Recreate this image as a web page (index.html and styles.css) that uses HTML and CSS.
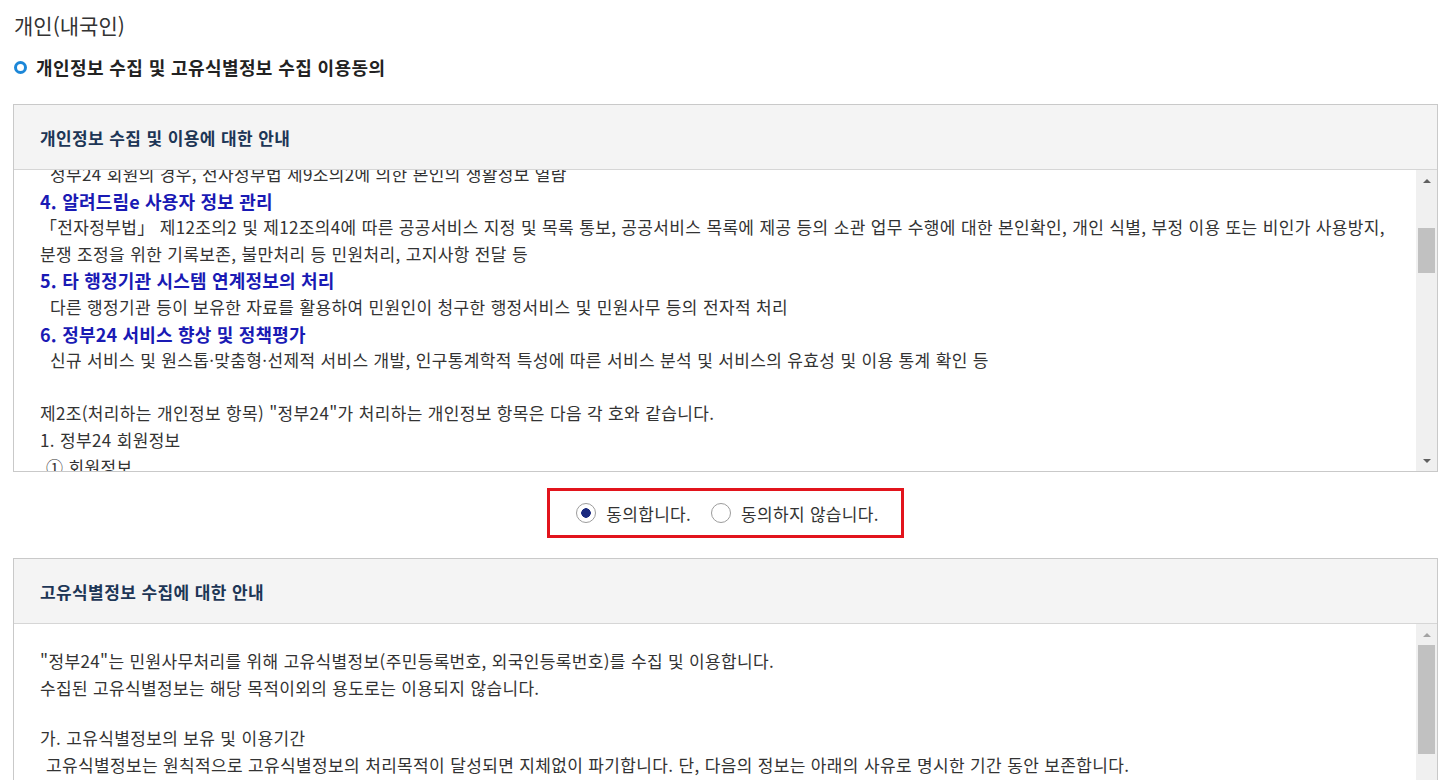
FILE: index.html
```html
<!DOCTYPE html>
<html lang="ko">
<head>
  <meta charset="UTF-8" />
  <meta name="viewport" content="width=device-width, initial-scale=1.0"/>
  <title>개인(내국인) 이용동의</title>
  <link rel="stylesheet" href="styles.css">
</head>
<body>
  <div class="wrap">

    <h2 class="page-title">개인(내국인)</h2>
    <h3 class="sub-title"><span class="dot"></span>개인정보 수집 및 고유식별정보 수집 이용동의</h3>

    <!-- 개인정보 수집 및 이용 -->
    <div class="terms">
      <div class="terms-head">개인정보 수집 및 이용에 대한 안내</div>
      <div class="terms-body">
        <div class="terms-text">
          <div class="terms-inner scrolled">
            <p class="indent">정부24 회원의 경우, 전자정부법 제9조의2에 의한 본인의 생활정보 열람</p>
            <p class="tit">4. 알려드림e 사용자 정보 관리</p>
            <p>「전자정부법」 제12조의2 및 제12조의4에 따른 공공서비스 지정 및 목록 통보, 공공서비스 목록에 제공 등의 소관 업무 수행에 대한 본인확인, 개인 식별, 부정 이용 또는 비인가 사용방지,<br>분쟁 조정을 위한 기록보존, 불만처리 등 민원처리, 고지사항 전달 등</p>
            <p class="tit">5. 타 행정기관 시스템 연계정보의 처리</p>
            <p class="indent">다른 행정기관 등이 보유한 자료를 활용하여 민원인이 청구한 행정서비스 및 민원사무 등의 전자적 처리</p>
            <p class="tit">6. 정부24 서비스 향상 및 정책평가</p>
            <p class="indent">신규 서비스 및 원스톱·맞춤형·선제적 서비스 개발, 인구통계학적 특성에 따른 서비스 분석 및 서비스의 유효성 및 이용 통계 확인 등</p>
            <p>&nbsp;</p>
            <p>제2조(처리하는 개인정보 항목) "정부24"가 처리하는 개인정보 항목은 다음 각 호와 같습니다.</p>
            <p>1. 정부24 회원정보</p>
            <p class="indent-sm">① 회원정보</p>
            <p class="indent">아이디, 비밀번호, 성명, 생년월일, 성별, 내외국인 구분</p>
          </div>
        </div>
        <div class="scrollbar">
          <span class="arrow up"></span>
          <div class="track"><div class="thumb" style="margin-top: 37px; height: 45px;"></div></div>
          <span class="arrow down"></span>
        </div>
      </div>
    </div>

    <div class="agree">
      <div class="agree-box">
        <label class="radio"><input type="radio" name="agree1" checked> 동의합니다.</label>
        <label class="radio"><input type="radio" name="agree1"> 동의하지 않습니다.</label>
      </div>
    </div>

    <!-- 고유식별정보 수집 -->
    <div class="terms">
      <div class="terms-head">고유식별정보 수집에 대한 안내</div>
      <div class="terms-body">
        <div class="terms-text">
          <div class="terms-inner top">
            <p>"정부24"는 민원사무처리를 위해 고유식별정보(주민등록번호, 외국인등록번호)를 수집 및 이용합니다.</p>
            <p>수집된 고유식별정보는 해당 목적이외의 용도로는 이용되지 않습니다.</p>
            <p class="gap">&nbsp;</p>
            <p>가. 고유식별정보의 보유 및 이용기간</p>
            <p class="indent-sm">고유식별정보는 원칙적으로 고유식별정보의 처리목적이 달성되면 지체없이 파기합니다. 단, 다음의 정보는 아래의 사유로 명시한 기간 동안 보존합니다.</p>
            <p class="indent-sm">- 보존근거 : 민원 처리에 관한 법률 시행령 제9조</p>
            <p class="indent-sm">- 보존기간 : 5년</p>
          </div>
        </div>
        <div class="scrollbar">
          <span class="arrow up light"></span>
          <div class="track"><div class="thumb" style="margin-top: 0; height: 109px;"></div></div>
          <span class="arrow down"></span>
        </div>
      </div>
    </div>

  </div>
</body>
</html>
```

FILE: styles.css
```css
html {
  overflow: hidden;
}

body {
  margin: 0;
  font-family: "Noto Sans CJK KR", "Noto Sans", sans-serif;
  color: #333;
  background-color: #fff;
}

.wrap {
  padding: 10px 15px 0 13px;
}

.page-title {
  margin: 0 0 0 1px;
  font-size: 21px;
  font-weight: normal;
  line-height: 30px;
  color: #333;
}

.sub-title {
  display: flex;
  align-items: center;
  gap: 9px;
  margin: 14px 0 24px 1px;
  font-size: 18px;
  font-weight: bold;
  letter-spacing: 0.4px;
  line-height: 26px;
  color: #222;
}

.dot {
  width: 7px;
  height: 7px;
  border: 3px solid #1c87d8;
  border-radius: 50%;
}

/* terms panel */
.terms {
  border: 1px solid #c9c9c9;
}

.terms-head {
  display: flex;
  align-items: center;
  height: 64px;
  padding-left: 26px;
  background-color: #f4f4f4;
  border-bottom: 1px solid #d6d6d6;
  font-size: 17px;
  font-weight: bold;
  letter-spacing: 0.4px;
  color: #1d3656;
}

.terms-body {
  display: flex;
  height: 301px;
}

.terms-text {
  flex: 1;
  overflow: hidden;
  padding-left: 26px;
  font-size: 17px;
  letter-spacing: 0.35px;
  line-height: 26.6px;
}

.terms-inner p {
  margin: 0;
  white-space: nowrap;
}

.terms-inner.scrolled {
  margin-top: -9px;
}

.terms-inner.top {
  padding-top: 24px;
}

.terms-inner .gap {
  line-height: 24px;
}

.terms-inner .tit {
  font-size: 18px;
  font-weight: bold;
  letter-spacing: 0.2px;
  color: #1a1ab4;
}

.terms-inner .indent {
  padding-left: 10px;
}

.terms-inner .indent-sm {
  padding-left: 6px;
}

/* fake scrollbar */
.scrollbar {
  display: flex;
  flex-direction: column;
  width: 21px;
  background-color: #f0f0f0;
}

.arrow {
  display: flex;
  align-items: center;
  justify-content: center;
  height: 21px;
}

.arrow::before {
  content: "";
  border-left: 4px solid transparent;
  border-right: 4px solid transparent;
}

.arrow.up::before {
  border-bottom: 4px solid #606060;
}

.arrow.down::before {
  border-top: 4px solid #606060;
}

.arrow.up.light::before {
  border-bottom-color: #a3a3a3;
}

.track {
  flex: 1;
  padding: 0 2px;
}

.thumb {
  background-color: #c1c1c1;
}

/* agree radios */
.agree {
  display: flex;
  justify-content: center;
  margin: 16px 0 20px;
}

.agree-box {
  display: flex;
  align-items: center;
  gap: 20px;
  height: 44px;
  padding: 0 22px 0 26px;
  border: 3px solid #e2141c;
}

.radio {
  display: flex;
  align-items: center;
  gap: 10px;
  font-size: 17px;
  letter-spacing: 0.3px;
  color: #333;
}

.radio input {
  appearance: none;
  width: 20px;
  height: 20px;
  margin: 0;
  border: 1px solid #9c9c9c;
  border-radius: 50%;
  background-color: #fff;
}

.radio input:checked {
  background: radial-gradient(circle, #1b2a80 0 4.5px, #fff 5px);
}
```
